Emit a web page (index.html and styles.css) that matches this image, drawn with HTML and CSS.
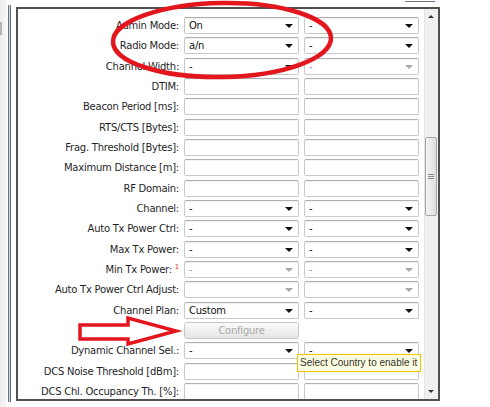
FILE: index.html
```html
<!DOCTYPE html>
<html lang="en">

<head>
    <meta charset="utf-8">
    <meta name="viewport" content="width=device-width, initial-scale=1.0">
    <title>Radio settings</title>
    <link rel="stylesheet" href="styles.css">
</head>

<body>
    <div class="page">
        <div class="side"><span class="side_mark"></span></div>
        <div class="rule"></div>
        <div class="dialog">
            <div class="form">
                <div class="label">Admin Mode:</div>
                <div class="field sel">On</div>
                <div class="field sel">-</div>

                <div class="label">Radio Mode:</div>
                <div class="field sel">a/n</div>
                <div class="field sel">-</div>

                <div class="label">Channel Width:</div>
                <div class="field sel">-</div>
                <div class="field sel off">-</div>

                <div class="label">DTIM:</div>
                <div class="field"></div>
                <div class="field"></div>

                <div class="label">Beacon Period [ms]:</div>
                <div class="field"></div>
                <div class="field"></div>

                <div class="label">RTS/CTS [Bytes]:</div>
                <div class="field"></div>
                <div class="field"></div>

                <div class="label">Frag. Threshold [Bytes]:</div>
                <div class="field"></div>
                <div class="field"></div>

                <div class="label">Maximum Distance [m]:</div>
                <div class="field"></div>
                <div class="field"></div>

                <div class="label">RF Domain:</div>
                <div class="field"></div>
                <div class="field"></div>

                <div class="label">Channel:</div>
                <div class="field sel">-</div>
                <div class="field sel">-</div>

                <div class="label">Auto Tx Power Ctrl:</div>
                <div class="field sel">-</div>
                <div class="field sel">-</div>

                <div class="label">Max Tx Power:</div>
                <div class="field sel">-</div>
                <div class="field sel">-</div>

                <div class="label">Min Tx Power: <sup class="note">1</sup></div>
                <div class="field sel off">-</div>
                <div class="field sel off">-</div>

                <div class="label">Auto Tx Power Ctrl Adjust:</div>
                <div class="field sel off"></div>
                <div class="field sel off"></div>

                <div class="label">Channel Plan:</div>
                <div class="field sel">Custom</div>
                <div class="field sel">-</div>

                <div class="label"></div>
                <div class="btn">Configure</div>
                <div></div>

                <div class="label">Dynamic Channel Sel.:</div>
                <div class="field sel">-</div>
                <div class="field sel">-</div>

                <div class="label">DCS Noise Threshold [dBm]:</div>
                <div class="field"></div>
                <div class="field"></div>

                <div class="label">DCS Chl. Occupancy Th. [%]:</div>
                <div class="field"></div>
                <div class="field"></div>
            </div>
            <div class="scroll">
                <div class="scroll_btn up"></div>
                <div class="scroll_gap"></div>
                <div class="thumb"><span></span><span></span><span></span></div>
                <div class="scroll_fill"></div>
                <div class="scroll_btn down"></div>
            </div>
        </div>
    </div>

    <!-- overlays -->
    <div class="top_line"></div>
    <div class="tip">Select Country to enable it</div>
    <svg class="marks" width="490" height="407" viewBox="0 0 490 407">
        <ellipse cx="222" cy="40" rx="109" ry="37" transform="rotate(-1 222 40)" />
        <polygon points="80,325 128,325 128,318 176,331 128,344 128,339 80,339" />
    </svg>
</body>

</html>
```

FILE: styles.css
```css
* {
    box-sizing: border-box;
}

body {
    margin: 0;
    background-color: #fff;
    width: 490px;
    height: 407px;
    overflow: hidden;
    position: relative;
    font-family: 'DejaVu Sans', sans-serif;
    font-size: 10px;
    letter-spacing: -0.25px;
    color: #1f1f28;
}

.page {
    display: flex;
    height: 407px;
}

/*Left edge of window behind*/
.side {
    width: 7px;
    height: 100%;
    background: linear-gradient(to right, #ececec, #f8f8f8);
    position: relative;
}

.side_mark {
    position: absolute;
    top: 22px;
    left: 0;
    width: 2px;
    height: 13px;
    background-color: #b4b4b4;
}

.rule {
    margin: 5px 0 0 1px;
    width: 3px;
    height: 397px;
    border-left: 1px solid #68727e;
    border-right: 1px solid #68727e;
    background-color: #c9d3de;
}

/*Dialog*/
.dialog {
    margin: 7px 0 0 5px;
    width: 424px;
    height: 394px;
    border: 2px solid #505050;
    display: flex;
    background-color: #fff;
}

.form {
    flex: 1;
    padding-top: 8px;
    overflow: hidden;
    display: grid;
    grid-template-columns: 161px 115px 115px;
    grid-auto-rows: 17px;
    column-gap: 5px;
    row-gap: 3.33px;
    align-content: start;
}

.label {
    text-align: right;
    white-space: nowrap;
    line-height: 17px;
}

.note {
    color: #e0302a;
    font-size: 7px;
    vertical-align: 4px;
    line-height: 0;
}

.field {
    position: relative;
    height: 17px;
    border: 1px solid #c9c9c9;
    border-top-color: #b0b0b0;
    border-radius: 2px;
    box-shadow: inset 0 1px 1px rgba(0, 0, 0, 0.06);
    padding-left: 4px;
    line-height: 15px;
    color: #111;
}

.sel::after {
    content: "";
    position: absolute;
    right: 5px;
    top: 6px;
    border-left: 4px solid transparent;
    border-right: 4px solid transparent;
    border-top: 4px solid #111;
}

.off {
    color: #9a9a9a;
}

.off::after {
    border-top-color: #a8a8a8;
}

.btn {
    height: 17px;
    border: 1px solid #c8c8c8;
    border-radius: 3px;
    background: linear-gradient(#fafafa, #e6e6e6);
    color: #a9a9a9;
    text-align: center;
    line-height: 15px;
}

/*Scrollbar*/
.scroll {
    width: 14px;
    background-color: #f0f0f0;
    border-left: 1px solid #e4e4e4;
    display: flex;
    flex-direction: column;
}

.scroll_btn {
    height: 15px;
    position: relative;
}

.scroll_btn::after {
    content: "";
    position: absolute;
    left: 3px;
    border-left: 3px solid transparent;
    border-right: 3px solid transparent;
}

.up::after {
    top: 6px;
    border-bottom: 3px solid #333;
}

.down::after {
    top: 6px;
    border-top: 3px solid #333;
}

.scroll_gap {
    height: 113px;
}

.thumb {
    height: 79px;
    margin: 0 1px 0 0;
    border: 1px solid #a6a6a6;
    border-radius: 2px;
    background: linear-gradient(to right, #f4f4f4, #dedede);
    display: flex;
    flex-direction: column;
    justify-content: center;
    align-items: center;
    gap: 1px;
}

.thumb span {
    width: 6px;
    height: 1px;
    background-color: #8a8a8a;
}

.scroll_fill {
    flex: 1;
}

/*Overlays*/
.top_line {
    position: absolute;
    top: 1px;
    left: 405px;
    width: 30px;
    height: 1px;
    background: linear-gradient(to right, #777 80%, #3a6fc0);
}

.tip {
    position: absolute;
    left: 297px;
    top: 354px;
    width: 124px;
    height: 18px;
    background-color: #ffffe1;
    border: 1px solid #f2c200;
    font-family: 'Liberation Sans', sans-serif;
    font-size: 10px;
    letter-spacing: 0;
    line-height: 16px;
    color: #333;
    padding-left: 2px;
    white-space: nowrap;
}

.marks {
    position: absolute;
    top: 0;
    left: 0;
    pointer-events: none;
}

.marks ellipse,
.marks polygon {
    fill: none;
    stroke: #e3161d;
    stroke-width: 4.5;
    stroke-linejoin: miter;
}

.marks polygon {
    stroke-width: 3.5;
}
```
